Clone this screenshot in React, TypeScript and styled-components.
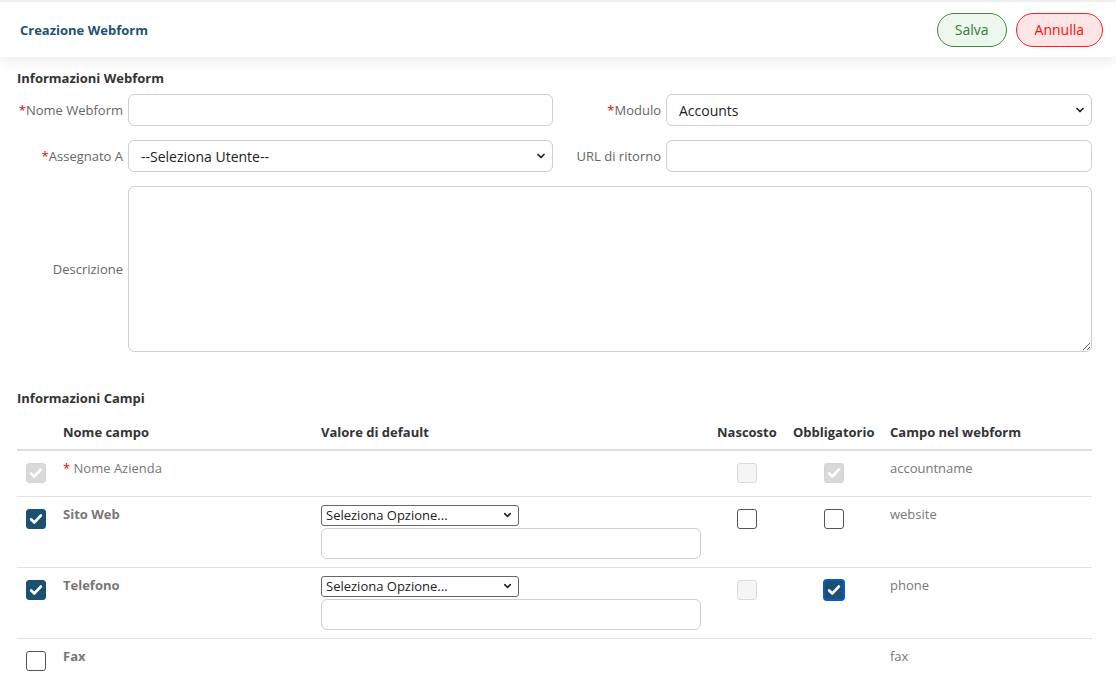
import React from "react";
import styled, { createGlobalStyle } from "styled-components";
import { ChevronDown } from "lucide-react";

const GlobalStyle = createGlobalStyle`
  html, body {
    margin: 0;
    padding: 0;
    background: #fff;
    font-family: "Open Sans", "Liberation Sans", sans-serif;
    font-size: 13px;
    color: #333;
  }
  * {
    box-sizing: border-box;
  }
`;

interface FieldRow {
  name: string;
  webformField: string;
  required?: boolean;
  selected: boolean;
  locked?: boolean;
  hidden: "off" | "disabled";
  mandatory: "on" | "off" | "locked" | "focus";
  withDefault?: boolean;
}

const FIELDS: FieldRow[] = [
  {
    name: "Nome Azienda",
    webformField: "accountname",
    required: true,
    selected: true,
    locked: true,
    hidden: "disabled",
    mandatory: "locked",
  },
  {
    name: "Sito Web",
    webformField: "website",
    selected: true,
    hidden: "off",
    mandatory: "off",
    withDefault: true,
  },
  {
    name: "Telefono",
    webformField: "phone",
    selected: true,
    hidden: "disabled",
    mandatory: "focus",
    withDefault: true,
  },
  {
    name: "Fax",
    webformField: "fax",
    selected: false,
    hidden: "off",
    mandatory: "off",
  },
];

type BoxState = "on" | "off" | "locked" | "disabled" | "focus";

const CheckBox = ({ state }: { state: BoxState }) => (
  <Box $state={state}>
    {state !== "off" && state !== "disabled" && (
      <svg width="14" height="14" viewBox="0 0 14 14">
        <path
          d="M2.2 7.4 L5.4 10.4 L11.8 3.6"
          fill="none"
          stroke="#fff"
          strokeWidth="2.8"
          strokeLinecap="round"
          strokeLinejoin="round"
        />
      </svg>
    )}
  </Box>
);

const SelectBox = ({
  value,
  small,
}: {
  value: string;
  small?: boolean;
}) => (
  <SelectWrap $small={small}>
    <Select $small={small} defaultValue={value}>
      <option>{value}</option>
    </Select>
    <Chevron>
      <ChevronDown size={small ? 11 : 12} strokeWidth={3.4} color="#222" />
    </Chevron>
  </SelectWrap>
);

export default function App() {
  return (
    <>
      <GlobalStyle />
      <Header>
        <Title>Creazione Webform</Title>
        <Actions>
          <PillButton $tone="save">Salva</PillButton>
          <PillButton $tone="cancel">Annulla</PillButton>
        </Actions>
      </Header>

      <Content>
        <SectionTitle>Informazioni Webform</SectionTitle>
        <FormGrid>
          <Label>
            <Req>*</Req>Nome Webform
          </Label>
          <TextInput type="text" />
          <Label>
            <Req>*</Req>Modulo
          </Label>
          <SelectBox value="Accounts" />

          <Label>
            <Req>*</Req>Assegnato A
          </Label>
          <SelectBox value="--Seleziona Utente--" />
          <Label>URL di ritorno</Label>
          <TextInput type="text" />

          <Label>Descrizione</Label>
          <TextArea />
        </FormGrid>

        <SectionTitle $spaced>Informazioni Campi</SectionTitle>
        <Table>
          <colgroup>
            <col style={{ width: 46 }} />
            <col style={{ width: 258 }} />
            <col style={{ width: 396 }} />
            <col style={{ width: 76 }} />
            <col style={{ width: 97 }} />
            <col />
          </colgroup>
          <thead>
            <tr>
              <Th />
              <Th>Nome campo</Th>
              <Th>Valore di default</Th>
              <Th>Nascosto</Th>
              <Th>Obbligatorio</Th>
              <Th>Campo nel webform</Th>
            </tr>
          </thead>
          <tbody>
            {FIELDS.map((f) => (
              <Row key={f.webformField}>
                <BoxCell $offset={9}>
                  <CheckBox
                    state={f.locked ? "locked" : f.selected ? "on" : "off"}
                  />
                </BoxCell>
                <Td>
                  {f.required ? (
                    <Plain>
                      <Req>*</Req> {f.name}
                    </Plain>
                  ) : (
                    <Strong>{f.name}</Strong>
                  )}
                </Td>
                <Td>
                  {f.withDefault && (
                    <DefaultStack>
                      <SelectBox value="Seleziona Opzione..." small />
                      <TextInput type="text" $width={380} $height={31} />
                    </DefaultStack>
                  )}
                </Td>
                <BoxCell $offset={20}>
                  {f.withDefault || f.locked ? (
                    <CheckBox state={f.hidden} />
                  ) : null}
                </BoxCell>
                <BoxCell $offset={31}>
                  {f.withDefault || f.locked ? (
                    <CheckBox state={f.mandatory} />
                  ) : null}
                </BoxCell>
                <Td>
                  <Plain>{f.webformField}</Plain>
                </Td>
              </Row>
            ))}
          </tbody>
        </Table>
      </Content>
    </>
  );
}

const Header = styled.header`
  display: flex;
  align-items: center;
  justify-content: space-between;
  height: 57px;
  padding: 0 13px 0 20px;
  border-top: 2px solid #eeeeee;
  background: #fff;
  box-shadow: 0 5px 12px rgba(0, 0, 0, 0.07);
  position: relative;
`;

const Title = styled.h1`
  margin: 0;
  font-size: 13px;
  font-weight: 700;
  color: #1d5270;
`;

const Actions = styled.div`
  display: flex;
  gap: 9px;
`;

const PillButton = styled.button<{ $tone: "save" | "cancel" }>`
  height: 34px;
  padding: 0 ${({ $tone }) => ($tone === "save" ? "17px" : "18px")};
  border-radius: 17px;
  font-family: inherit;
  font-size: 14px;
  cursor: pointer;
  border: 1px solid
    ${({ $tone }) => ($tone === "save" ? "#3f8a3f" : "#ff1f1f")};
  background: ${({ $tone }) => ($tone === "save" ? "#eef7ee" : "#ffe6e6")};
  color: ${({ $tone }) => ($tone === "save" ? "#2f7d32" : "#ff0a0a")};
`;

const Content = styled.main`
  padding: 12px 24px 0 17px;
`;

const SectionTitle = styled.h2<{ $spaced?: boolean }>`
  margin: ${({ $spaced }) => ($spaced ? "37px 0 8px" : "0 0 7px")};
  font-size: 13px;
  font-weight: 700;
  line-height: 18px;
  color: #333;
`;

const FormGrid = styled.div`
  display: grid;
  grid-template-columns: 106px 425px 103px 1fr;
  column-gap: 5px;
  row-gap: 14px;
  align-items: center;
`;

const Label = styled.label`
  text-align: right;
  color: #666;
  font-size: 13px;
  white-space: nowrap;
`;

const Req = styled.span`
  color: #e00;
`;

const TextInput = styled.input<{ $width?: number; $height?: number }>`
  width: ${({ $width }) => ($width ? `${$width}px` : "100%")};
  height: ${({ $height }) => ($height ? `${$height}px` : "32px")};
  border: 1px solid #cfcfcf;
  border-radius: 6px;
  padding: 0 10px;
  font-family: inherit;
  font-size: 14px;
  outline: none;
  background: #fff;
`;

const SelectWrap = styled.div<{ $small?: boolean }>`
  position: relative;
  width: ${({ $small }) => ($small ? "198px" : "100%")};
`;

const Select = styled.select<{ $small?: boolean }>`
  appearance: none;
  width: 100%;
  height: ${({ $small }) => ($small ? "21px" : "32px")};
  border: 1px solid ${({ $small }) => ($small ? "#666" : "#cfcfcf")};
  border-radius: ${({ $small }) => ($small ? "3px" : "6px")};
  padding: ${({ $small }) => ($small ? "0 4px" : "0 12px")};
  font-family: inherit;
  font-size: ${({ $small }) => ($small ? "13px" : "14px")};
  color: #222;
  background: #fff;
  outline: none;
`;

const Chevron = styled.span`
  position: absolute;
  right: 6px;
  top: 50%;
  transform: translateY(-50%);
  display: flex;
  pointer-events: none;
`;

const TextArea = styled.textarea`
  grid-column: 2 / 5;
  height: 166px;
  border: 1px solid #cfcfcf;
  border-radius: 6px;
  font-family: inherit;
  font-size: 14px;
  outline: none;
  resize: vertical;
`;

const Table = styled.table`
  width: 100%;
  border-collapse: collapse;
  table-layout: fixed;
`;

const Th = styled.th`
  text-align: left;
  padding: 8px 0;
  line-height: 18px;
  font-size: 13px;
  font-weight: 700;
  color: #333;
  border-bottom: 2px solid #dedede;
  white-space: nowrap;
`;

const Row = styled.tr`
  height: 46px;
  border-bottom: 1px solid #e2e2e2;
`;

const Td = styled.td`
  vertical-align: top;
  padding: 8px 0;
  line-height: 18px;
`;

const BoxCell = styled(Td)<{ $offset: number }>`
  padding-left: ${({ $offset }) => $offset}px;
  padding-top: 12px;
`;

const Plain = styled.span`
  color: #777;
  font-size: 13px;
`;

const Strong = styled.span`
  color: #777;
  font-size: 13px;
  font-weight: 700;
`;

const DefaultStack = styled.div`
  display: flex;
  flex-direction: column;
  gap: 2px;
`;

const Box = styled.span<{ $state: BoxState }>`
  display: flex;
  align-items: center;
  justify-content: center;
  width: 20px;
  height: 20px;
  border-radius: 3px;
  border: 1px solid
    ${({ $state }) =>
      $state === "on"
        ? "#1b5070"
        : $state === "focus"
        ? "#0a58d0"
        : $state === "locked"
        ? "#d4d4d4"
        : $state === "disabled"
        ? "#dadada"
        : "#555"};
  background: ${({ $state }) =>
    $state === "on" || $state === "focus"
      ? "#1b5070"
      : $state === "locked"
      ? "#d9d9d9"
      : $state === "disabled"
      ? "#f5f5f5"
      : "#fff"};
  box-shadow: ${({ $state }) =>
    $state === "focus" ? "0 0 0 1px #0a58d0" : "none"};
`;
